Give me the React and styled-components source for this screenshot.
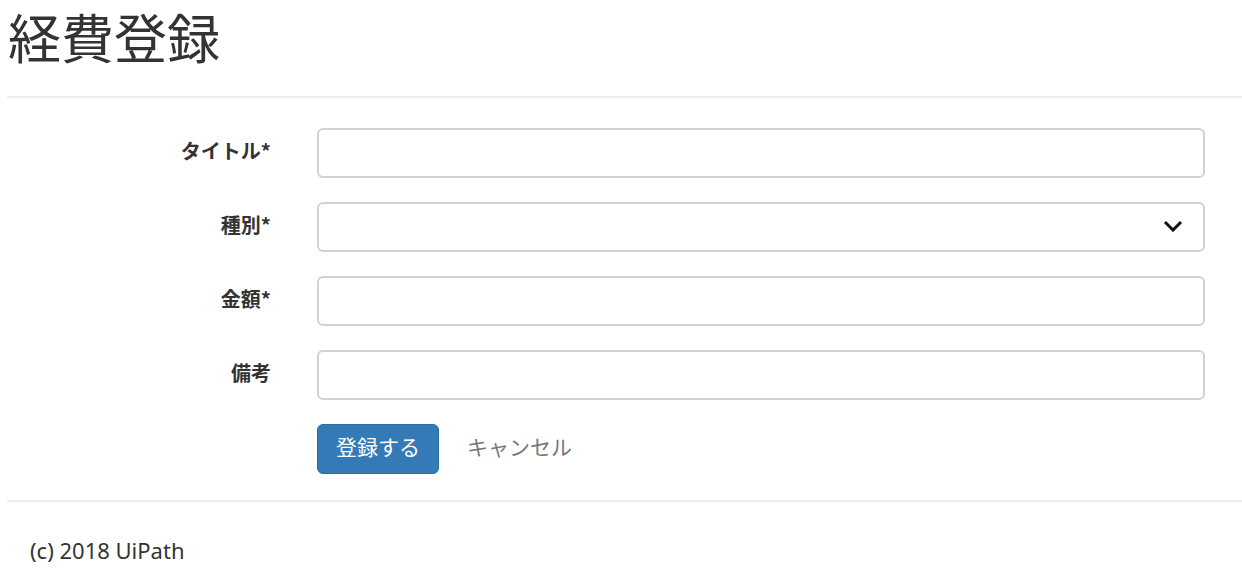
import React from 'react';
import styled, { createGlobalStyle } from 'styled-components';

const GlobalStyle = createGlobalStyle`
  html, body {
    margin: 0;
    padding: 0;
    background: #fff;
  }
  body {
    font-family: "Noto Sans", "Noto Sans CJK JP", sans-serif;
    color: #333;
  }
`;

const Page = styled.div`
  padding: 0 0 0 7px;
`;

const Title = styled.h1`
  margin: 0;
  padding-left: 1px;
  font-family: "Noto Sans CJK JP", sans-serif;
  font-size: 53px;
  font-weight: 400;
  line-height: 72px;
  color: #333;
`;

const Rule = styled.hr`
  margin: ${p => p.$top}px 0 0;
  border: 0;
  border-top: 2px solid #eee;
`;

const Form = styled.form`
  display: flex;
  flex-direction: column;
  gap: 24px;
  padding-top: 30px;
`;

const Row = styled.div`
  display: grid;
  grid-template-columns: 264px 888px;
  column-gap: 46px;
  align-items: start;
`;

const Label = styled.label`
  padding-top: 8px;
  text-align: right;
  font-family: "Noto Sans CJK JP", sans-serif;
  font-weight: 700;
  font-size: 20px;
  line-height: 30px;
  color: #333;
`;

const Field = styled.div`
  position: relative;
  height: 50px;
  box-sizing: border-box;
  border: 2px solid #d2d2d2;
  border-radius: 6px;
  background: #fff;
`;

const Chevron = styled.svg`
  position: absolute;
  right: 20px;
  top: 16px;
`;

const Actions = styled.div`
  display: flex;
  align-items: center;
  gap: 28px;
`;

const Submit = styled.button`
  height: 50px;
  padding: 0 18px 6px;
  border: 1.5px solid #2e6da4;
  border-radius: 6px;
  background: #337ab7;
  color: #fff;
  font-family: "Noto Sans CJK JP", sans-serif;
  font-size: 21px;
`;

const Cancel = styled.a`
  padding-bottom: 6px;
  font-family: "Noto Sans CJK JP", sans-serif;
  font-size: 21px;
  color: #777;
  text-decoration: none;
`;

const Footer = styled.footer`
  padding: 33px 0 0 23px;
  font-family: "Noto Sans", sans-serif;
  font-size: 22px;
  line-height: 30px;
  color: #333;
`;

const fields = [
  { label: 'タイトル*' },
  { label: '種別*', select: true },
  { label: '金額*' },
  { label: '備考' },
];

export default function App() {
  return (
    <Page>
      <GlobalStyle />
      <Title>経費登録</Title>
      <Rule $top={24} />
      <Form>
        {fields.map(f => (
          <Row key={f.label}>
            <Label>{f.label}</Label>
            <Field>
              {f.select && (
                <Chevron width="20" height="12" viewBox="0 0 20 12">
                  <path d="M2 2 L10 10 L18 2" fill="none" stroke="#111" strokeWidth="3" />
                </Chevron>
              )}
            </Field>
          </Row>
        ))}
        <Row>
          <span />
          <Actions>
            <Submit type="button">登録する</Submit>
            <Cancel href="#">キャンセル</Cancel>
          </Actions>
        </Row>
      </Form>
      <Rule $top={26} />
      <Footer>(c) 2018 UiPath</Footer>
    </Page>
  );
}
